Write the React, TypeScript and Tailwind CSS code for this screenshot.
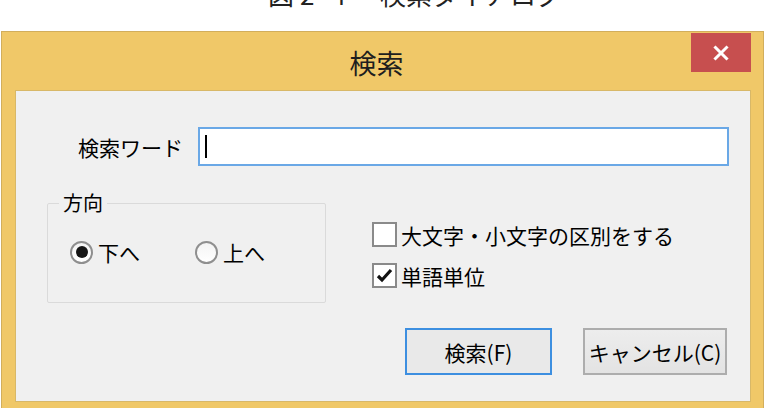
import React from 'react';

const jp = { fontFamily: '"Noto Sans CJK JP", "Noto Sans", sans-serif' };

function Radio({ checked, label, className = '' }: { checked?: boolean; label: string; className?: string }) {
    return (
        <label className={`flex items-center gap-[5px] ${className}`}>
            <span className="w-[23px] h-[23px] rounded-full border-2 border-[#8f8f8f] bg-gradient-to-b from-[#f4f4f4] to-white flex items-center justify-center">
                {checked && <span className="w-[12px] h-[12px] rounded-full bg-[#151515]" />}
            </span>
            <span className="text-[21px] leading-[24px] text-black">{label}</span>
        </label>
    );
}

function Check({ checked, label, className = '' }: { checked?: boolean; label: string; className?: string }) {
    return (
        <label className={`flex items-center gap-[4px] ${className}`}>
            <span className="w-[25px] h-[25px] border-2 border-[#8a8a8a] bg-white flex items-center justify-center">
                {checked && (
                    <svg width="17" height="15" viewBox="0 0 17 15">
                        <path d="M2 8 L6 12 L15 2" fill="none" stroke="#111" strokeWidth="3.2" />
                    </svg>
                )}
            </span>
            <span className="text-[21px] leading-[24px] text-black">{label}</span>
        </label>
    );
}

export default function App() {
    return (
        <div className="w-[773px] h-[408px] bg-white overflow-hidden" style={jp}>
            {/* figure caption, only its lower edge is in frame */}
            <div className="h-[31px] overflow-hidden pl-[268px]">
                <div className="mt-[-19px] flex text-[26px] leading-[26px] text-[#222] whitespace-pre">
                    <span>図</span>
                    <span className="ml-[6px] tracking-[4px]">2-4</span>
                    <span className="ml-[30px]">検索ダイアログ</span>
                </div>
            </div>

            {/* dialog window */}
            <div className="ml-[1px] w-[763px] h-[390px] bg-[#f0c868] border border-[#d2ae5c] flex flex-col">
                <div className="h-[58px] flex items-start">
                    <div className="flex-1 h-full flex items-center justify-center pl-[60px]">
                        <span className="text-[27px] leading-[30px] text-[#1e1e1e] mt-[4px]">検索</span>
                    </div>
                    <div className="mt-[1px] mr-[12px] w-[60px] h-[39px] bg-[#c74f4f] flex items-center justify-center">
                        <svg width="16" height="16" viewBox="0 0 16 16">
                            <path d="M2.5 2.5 L13.5 13.5 M13.5 2.5 L2.5 13.5" stroke="#fff" strokeWidth="3" strokeLinecap="square" />
                        </svg>
                    </div>
                </div>

                {/* client area */}
                <div className="ml-[13px] w-[736px] h-[312px] bg-[#f0f0f0] border border-[#d8b868]">
                    <div className="pt-[36px] flex items-center">
                        <div className="w-[167px] text-right text-[21px] leading-[24px] text-black">検索ワード</div>
                        <div className="ml-[15px] w-[531px] h-[39px] bg-white border-2 border-[#6aa8e6] flex items-center pl-[5px]">
                            <span className="w-[2px] h-[23px] bg-black" />
                        </div>
                    </div>

                    <div className="mt-[26px] flex items-start">
                        <fieldset className="ml-[31px] w-[279px] h-[111px] border border-[#dadada] rounded-[2px]">
                            <legend className="ml-[11px] px-[4px] text-[20px] leading-[22px] text-black">方向</legend>
                            <div className="flex items-center mt-[26px] pl-[22px]">
                                <Radio checked label="下へ" />
                                <Radio label="上へ" className="ml-[55px]" />
                            </div>
                        </fieldset>
                        <div className="ml-[46px] pt-[30px] flex flex-col gap-[16px]">
                            <Check label="大文字・小文字の区別をする" />
                            <Check checked label="単語単位" />
                        </div>
                    </div>

                    <div className="mt-[25px] flex justify-end pr-[23px] gap-[31px]">
                        <button className="w-[147px] h-[47px] border-2 border-[#3d8fe0] bg-[#e9e9e9] text-[21px] leading-[24px] text-black">検索(F)</button>
                        <button className="w-[144px] h-[47px] border-2 border-[#adadad] bg-gradient-to-b from-[#ededed] to-[#e3e3e3] text-[21px] leading-[24px] text-black">キャンセル(C)</button>
                    </div>
                </div>
            </div>
        </div>
    );
}
